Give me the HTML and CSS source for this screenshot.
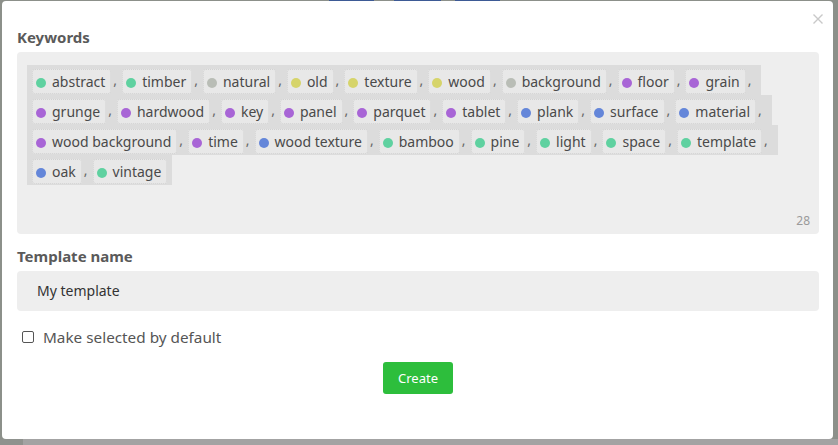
FILE: index.html
```html
<!DOCTYPE html>
<html lang="en">
<head>
<meta charset="utf-8">
<title>Create template</title>
<link rel="stylesheet" href="styles.css">
</head>
<body>
<div class="backdrop-top">
  <span class="bd-seg s1"></span>
  <span class="bd-seg s2"></span>
  <span class="bd-seg s3"></span>
</div>
<div class="modal">
  <button class="close" aria-label="Close">
    <svg width="10" height="10" viewBox="0 0 10 10"><path d="M0.5 0.5 L9.5 9.5 M9.5 0.5 L0.5 9.5" stroke="#c9c9c9" stroke-width="1.4" fill="none"/></svg>
  </button>
  <div class="label">Keywords</div>
  <div class="kw-box">
    <div class="kw-text"><span class="kw-line"><span class="tag"><i class="dot green"></i>abstract</span><span class="sep">,</span><span class="tag"><i class="dot green"></i>timber</span><span class="sep">,</span><span class="tag"><i class="dot grey"></i>natural</span><span class="sep">,</span><span class="tag"><i class="dot yellow"></i>old</span><span class="sep">,</span><span class="tag"><i class="dot yellow"></i>texture</span><span class="sep">,</span><span class="tag"><i class="dot yellow"></i>wood</span><span class="sep">,</span><span class="tag"><i class="dot grey"></i>background</span><span class="sep">,</span><span class="tag"><i class="dot purple"></i>floor</span><span class="sep">,</span><span class="tag"><i class="dot purple"></i>grain</span><span class="sep">,</span><span class="tag"><i class="dot purple"></i>grunge</span><span class="sep">,</span><span class="tag"><i class="dot purple"></i>hardwood</span><span class="sep">,</span><span class="tag"><i class="dot purple"></i>key</span><span class="sep">,</span><span class="tag"><i class="dot purple"></i>panel</span><span class="sep">,</span><span class="tag"><i class="dot purple"></i>parquet</span><span class="sep">,</span><span class="tag"><i class="dot purple"></i>tablet</span><span class="sep">,</span><span class="tag"><i class="dot blue"></i>plank</span><span class="sep">,</span><span class="tag"><i class="dot blue"></i>surface</span><span class="sep">,</span><span class="tag"><i class="dot blue"></i>material</span><span class="sep">,</span><span class="tag"><i class="dot purple"></i>wood background</span><span class="sep">,</span><span class="tag"><i class="dot purple"></i>time</span><span class="sep">,</span><span class="tag"><i class="dot blue"></i>wood texture</span><span class="sep">,</span><span class="tag"><i class="dot green"></i>bamboo</span><span class="sep">,</span><span class="tag"><i class="dot green"></i>pine</span><span class="sep">,</span><span class="tag"><i class="dot green"></i>light</span><span class="sep">,</span><span class="tag"><i class="dot green"></i>space</span><span class="sep">,</span><span class="tag"><i class="dot green"></i>template</span><span class="sep">,</span><span class="tag"><i class="dot blue"></i>oak</span><span class="sep">,</span><span class="tag last"><i class="dot green"></i>vintage</span></span></div>
    <div class="counter">28</div>
  </div>
  <div class="label label-2">Template name</div>
  <div class="input">My template</div>
  <label class="check-row"><input type="checkbox" class="check"><span>Make selected by default</span></label>
  <div class="actions"><button class="btn-create">Create</button></div>
</div>
<div class="backdrop-bottom"><span class="bb-left"></span><span class="bb-rest"></span></div>
</body>
</html>
```
FILE: styles.css
```css
* { box-sizing: border-box; }
html, body { margin: 0; padding: 0; }
body {
  background: #8c908a;
  font-family: "Noto Sans", "Open Sans", sans-serif;
  width: 838px;
  height: 445px;
  overflow: hidden;
}
.backdrop-top {
  height: 1px;
  display: flex;
}
.bd-seg { display: block; height: 1px; background: #3d5a95; }
.s1 { margin-left: 329px; width: 45px; }
.s2 { margin-left: 20px; width: 47px; }
.s3 { margin-left: 14px; width: 45px; }

.modal {
  position: relative;
  margin-left: 2px;
  width: 831px;
  height: 438px;
  background: #fff;
  border-radius: 4px;
  padding: 26px 14px 0 15px;
}
.close {
  position: absolute;
  top: 13px;
  right: 10px;
  width: 10px;
  height: 10px;
  padding: 0;
  border: 0;
  background: none;
  display: flex;
}
.label {
  font-weight: 700;
  font-size: 15px;
  line-height: 20px;
  color: #5a5a5a;
}
.kw-box {
  margin-top: 5px;
  height: 182px;
  background: #eeeeee;
  border-radius: 4px;
  padding: 13px 10px 6px 10px;
  display: flex;
  flex-direction: column;
}
.kw-text {
  flex: 1;
  font-size: 14px;
  line-height: 30px;
  color: #4a4a4a;
  padding-right: 28px;
}
.kw-line {
  background: #dcdcdc;
  padding: 5.5px 5px 5.5px 5px;
  -webkit-box-decoration-break: clone;
  box-decoration-break: clone;
}
.tag {
  display: inline-block;
  height: 25px;
  line-height: 23px;
  vertical-align: middle;
  background: #e8e8e8;
  border: 1px dotted #d2d2d2;
  border-radius: 3px;
  padding: 0 5px 0 3px;
  white-space: nowrap;
}
.dot {
  display: inline-block;
  width: 10px;
  height: 10px;
  border-radius: 50%;
  margin-right: 6px;
  vertical-align: -1px;
}
.green { background: #5fd1a0; }
.grey { background: #b9bdb6; }
.yellow { background: #d6d46a; }
.purple { background: #a865d6; }
.blue { background: #6486d9; }
.sep {
  margin: 0 5px 0 2px;
  color: #666;
}
.counter {
  align-self: flex-end;
  font-size: 12px;
  line-height: 14px;
  color: #9a9a9a;
  margin-right: -1px;
}
.label-2 { margin-top: 12px; }
.input {
  margin-top: 5px;
  height: 40px;
  background: #eeeeee;
  border-radius: 4px;
  padding: 0 20px;
  font-size: 14px;
  line-height: 40px;
  color: #333;
}
.check-row {
  display: flex;
  align-items: center;
  margin-top: 16px;
  margin-left: 5px;
  height: 20px;
  font-size: 15.3px;
  color: #555;
}
.check {
  appearance: none;
  -webkit-appearance: none;
  width: 12px;
  height: 12px;
  margin: 0 9px 0 0;
  border: 1px solid #555;
  border-radius: 2px;
  background: #fff;
}
.actions {
  display: flex;
  justify-content: center;
  margin-top: 15px;
}
.btn-create {
  width: 70px;
  height: 32px;
  border: 0;
  border-radius: 3px;
  background: #2dbe3c;
  color: #fff;
  font-family: "Noto Sans", sans-serif;
  font-size: 13px;
  padding: 0;
}
.backdrop-bottom {
  display: flex;
  height: 6px;
}
.bb-left { width: 23px; background: #8f928e; }
.bb-rest { flex: 1; background: #a3a3a3; }
```
